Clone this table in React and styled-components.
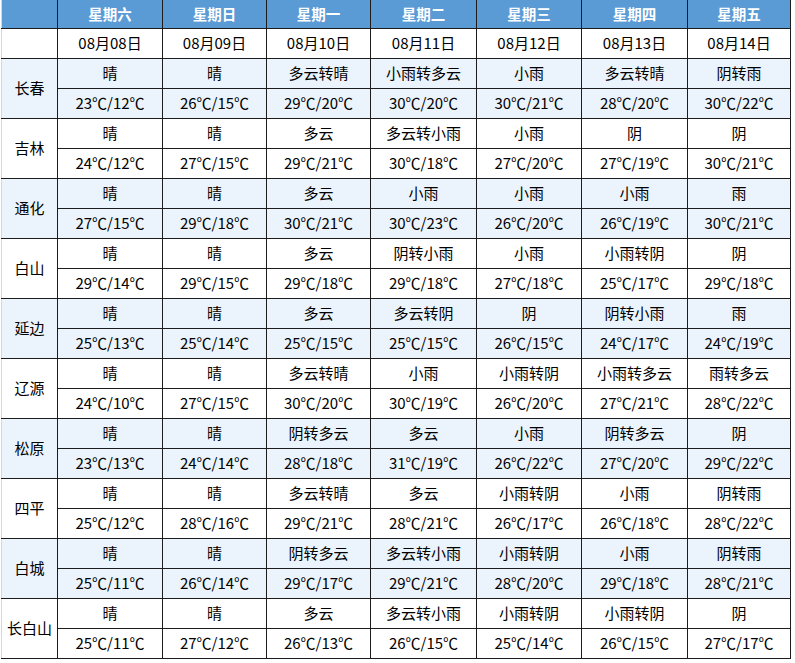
import React from "react";
import styled, { createGlobalStyle } from "styled-components";

const GlobalStyle = createGlobalStyle`
    body {
        margin: 0;
        background: #fff;
        font-family: "Noto Sans CJK SC", "Microsoft YaHei", sans-serif;
        color: #000;
    }
`;

const Page = styled.div`
    padding-left: 1px;
`;

const Table = styled.table`
    border-collapse: collapse;
    table-layout: fixed;
    width: 790px;
    font-size: 15px;
    text-align: center;
`;

const HeadRow = styled.tr`
    height: 28px;
`;

const Row = styled.tr`
    height: 30px;
    background: ${(p) => (p.$shade ? "#ebf3fc" : "#fff")};
`;

const HeadCell = styled.th`
    background: #5b9bd5;
    color: #fff;
    font-weight: bold;
    font-size: 14.5px;
    padding: 0;
    border: 1px solid #1c1c1c;
    border-top: none;
    line-height: 20px;
    &:first-child {
        border-left: 1px solid #d8d8d8;
    }
`;

const Cell = styled.td`
    padding: 0;
    border: 1px solid #1c1c1c;
    vertical-align: middle;
    line-height: 20px;
    white-space: nowrap;
`;

const CityCell = styled(Cell)`
    border-left: 1px solid #d8d8d8;
`;

const days = ["星期六", "星期日", "星期一", "星期二", "星期三", "星期四", "星期五"];
const dates = ["08月08日", "08月09日", "08月10日", "08月11日", "08月12日", "08月13日", "08月14日"];
const widths = [56, 105, 104, 104, 106, 105, 106, 103];

const cities = [
    {
        name: "长春",
        sky: ["晴", "晴", "多云转晴", "小雨转多云", "小雨", "多云转晴", "阴转雨"],
        temp: ["23/12", "26/15", "29/20", "30/20", "30/21", "28/20", "30/22"],
    },
    {
        name: "吉林",
        sky: ["晴", "晴", "多云", "多云转小雨", "小雨", "阴", "阴"],
        temp: ["24/12", "27/15", "29/21", "30/18", "27/20", "27/19", "30/21"],
    },
    {
        name: "通化",
        sky: ["晴", "晴", "多云", "小雨", "小雨", "小雨", "雨"],
        temp: ["27/15", "29/18", "30/21", "30/23", "26/20", "26/19", "30/21"],
    },
    {
        name: "白山",
        sky: ["晴", "晴", "多云", "阴转小雨", "小雨", "小雨转阴", "阴"],
        temp: ["29/14", "29/15", "29/18", "29/18", "27/18", "25/17", "29/18"],
    },
    {
        name: "延边",
        sky: ["晴", "晴", "多云", "多云转阴", "阴", "阴转小雨", "雨"],
        temp: ["25/13", "25/14", "25/15", "25/15", "26/15", "24/17", "24/19"],
    },
    {
        name: "辽源",
        sky: ["晴", "晴", "多云转晴", "小雨", "小雨转阴", "小雨转多云", "雨转多云"],
        temp: ["24/10", "27/15", "30/20", "30/19", "26/20", "27/21", "28/22"],
    },
    {
        name: "松原",
        sky: ["晴", "晴", "阴转多云", "多云", "小雨", "阴转多云", "阴"],
        temp: ["23/13", "24/14", "28/18", "31/19", "26/22", "27/20", "29/22"],
    },
    {
        name: "四平",
        sky: ["晴", "晴", "多云转晴", "多云", "小雨转阴", "小雨", "阴转雨"],
        temp: ["25/12", "28/16", "29/21", "28/21", "26/17", "26/18", "28/22"],
    },
    {
        name: "白城",
        sky: ["晴", "晴", "阴转多云", "多云转小雨", "小雨转阴", "小雨", "阴转雨"],
        temp: ["25/11", "26/14", "29/17", "29/21", "28/20", "29/18", "28/21"],
    },
    {
        name: "长白山",
        sky: ["晴", "晴", "多云", "多云转小雨", "小雨转阴", "小雨转阴", "阴"],
        temp: ["25/11", "27/12", "26/13", "26/15", "25/14", "26/15", "27/17"],
    },
];

const formatTemp = (t) => {
    const [hi, lo] = t.split("/");
    return `${hi}℃/${lo}℃`;
};

export default function App() {
    return (
        <Page>
            <GlobalStyle />
            <Table>
                <colgroup>
                    {widths.map((w, i) => (
                        <col key={i} style={{ width: w }} />
                    ))}
                </colgroup>
                <thead>
                    <HeadRow>
                        <HeadCell />
                        {days.map((d) => (
                            <HeadCell key={d}>{d}</HeadCell>
                        ))}
                    </HeadRow>
                </thead>
                <tbody>
                    <Row>
                        <CityCell />
                        {dates.map((d) => (
                            <Cell key={d}>{d}</Cell>
                        ))}
                    </Row>
                    {cities.map((c, i) => (
                        <React.Fragment key={c.name}>
                            <Row $shade={i % 2 === 0}>
                                <CityCell rowSpan={2}>{c.name}</CityCell>
                                {c.sky.map((s, j) => (
                                    <Cell key={j}>{s}</Cell>
                                ))}
                            </Row>
                            <Row $shade={i % 2 === 0}>
                                {c.temp.map((t, j) => (
                                    <Cell key={j}>{formatTemp(t)}</Cell>
                                ))}
                            </Row>
                        </React.Fragment>
                    ))}
                </tbody>
            </Table>
        </Page>
    );
}
